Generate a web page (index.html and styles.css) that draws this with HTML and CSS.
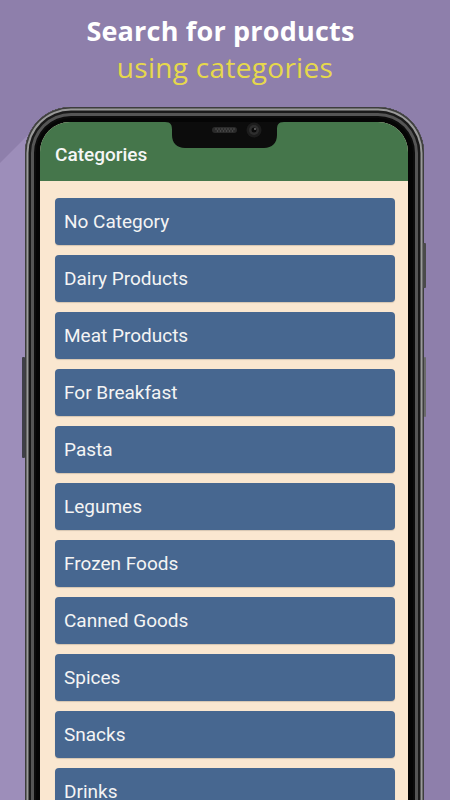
FILE: index.html
```html
<!DOCTYPE html>
<html>
<head>
<meta charset="utf-8">
<link rel="stylesheet" href="styles.css">
</head>
<body>
<div class="page">
  <div class="headline">
    <div class="line1">Search for products</div>
    <div class="line2">using categories</div>
  </div>
  <div class="phone">
    <span class="side-btn right-top"></span>
    <span class="side-btn right-low"></span>
    <span class="side-btn left-mid"></span>
    <div class="screen">
      <svg class="notch" width="119" height="27" viewBox="0 0 119 27">
        <path d="M0 0 H119 C113 0 112 3 112 8 V13 C112 21 107 26 99 26 H20 C12 26 7 21 7 13 V8 C7 3 6 0 0 0 Z" fill="#0c0c0c"/>
        <rect x="47" y="5" width="25" height="6" rx="3" fill="#2a2a2a"/>
        <g fill="#555">
          <circle cx="51" cy="7" r="0.8"/><circle cx="54" cy="7" r="0.8"/><circle cx="57" cy="7" r="0.8"/><circle cx="60" cy="7" r="0.8"/><circle cx="63" cy="7" r="0.8"/><circle cx="66" cy="7" r="0.8"/><circle cx="69" cy="7" r="0.8"/>
          <circle cx="52.5" cy="9" r="0.8"/><circle cx="55.5" cy="9" r="0.8"/><circle cx="58.5" cy="9" r="0.8"/><circle cx="61.5" cy="9" r="0.8"/><circle cx="64.5" cy="9" r="0.8"/><circle cx="67.5" cy="9" r="0.8"/>
        </g>
        <circle cx="89" cy="8" r="7.5" fill="#1c1c1c"/>
        <circle cx="89" cy="8" r="5" fill="#2e2e2e"/>
        <circle cx="89" cy="8" r="2.5" fill="#0a0a0a"/>
        <circle cx="90" cy="7" r="0.9" fill="#777"/>
      </svg>
      <div class="appbar">Categories</div>
      <div class="list">
        <div class="cat">No Category</div>
        <div class="cat">Dairy Products</div>
        <div class="cat">Meat Products</div>
        <div class="cat">For Breakfast</div>
        <div class="cat">Pasta</div>
        <div class="cat">Legumes</div>
        <div class="cat">Frozen Foods</div>
        <div class="cat">Canned Goods</div>
        <div class="cat">Spices</div>
        <div class="cat">Snacks</div>
        <div class="cat">Drinks</div>
      </div>
    </div>
  </div>
</div>
</body>
</html>
```
FILE: styles.css
```css
* { box-sizing: border-box; }
html, body {
  margin: 0;
  padding: 0;
  width: 450px;
  height: 800px;
  overflow: hidden;
}
body {
  background: #8e7fab;
}
.page {
  position: relative;
  width: 450px;
  height: 800px;
  overflow: hidden;
}
.page::before {
  content: "";
  position: absolute;
  left: 0;
  top: 0;
  width: 45px;
  height: 800px;
  background: #9d8eba;
  clip-path: polygon(0 163px, 45px 118px, 45px 100%, 0 100%);
}
.headline {
  position: relative;
  text-align: center;
  font-family: "Open Sans", sans-serif;
  padding-top: 12px;
  height: 107px;
}
.line1 {
  color: #ffffff;
  font-weight: 700;
  font-size: 27px;
  line-height: 37px;
  letter-spacing: 0.2px;
  padding-right: 9px;
}
.line2 {
  color: #e6d84c;
  font-weight: 400;
  font-size: 28px;
  line-height: 37px;
  letter-spacing: 0.3px;
}
.phone {
  position: relative;
  margin-left: 25px;
  width: 399px;
  height: 760px;
  background: #050505;
  border-radius: 46px;
  padding: 15px 16px 0 15px;
  box-shadow:
    inset 0 0 0 1.5px #3d3d3d,
    inset 0 0 0 3.5px #9a9a9a,
    inset 0 0 0 6px #1a1a1a,
    inset 0 0 0 9px #555555,
    inset 0 0 0 11px #0c0c0c;
}
.side-btn {
  position: absolute;
  width: 3px;
  background: #3a3a3a;
  border-radius: 1px;
}
.right-top { right: -2px; top: 136px; height: 45px; background: #4a4a4a; }
.right-low { right: -2px; top: 250px; height: 60px; background: #6a6a6a; width: 2px; }
.left-mid { left: -3px; top: 250px; height: 101px; background: #3f3f48; }
.screen {
  position: relative;
  height: 100%;
  background: #fae7d0;
  border-radius: 30px 30px 0 0;
  overflow: hidden;
  font-family: Roboto, "Noto Sans", sans-serif;
}
.notch {
  position: absolute;
  top: 0;
  left: 125px;
  display: block;
}
.appbar {
  height: 59px;
  background: #45764b;
  color: #f6f6f6;
  font-size: 19px;
  font-weight: 500;
  line-height: 26px;
  padding: 20px 15px 0 15px;
}
.list {
  display: flex;
  flex-direction: column;
  gap: 10px;
  padding: 17px 13px 0 15px;
}
.cat {
  height: 47px;
  background: #476790;
  border-radius: 4px;
  color: #f4f4f4;
  font-size: 19px;
  line-height: 48px;
  padding-left: 9px;
  box-shadow: 0 1px 1px rgba(0,0,0,0.15);
}
```
